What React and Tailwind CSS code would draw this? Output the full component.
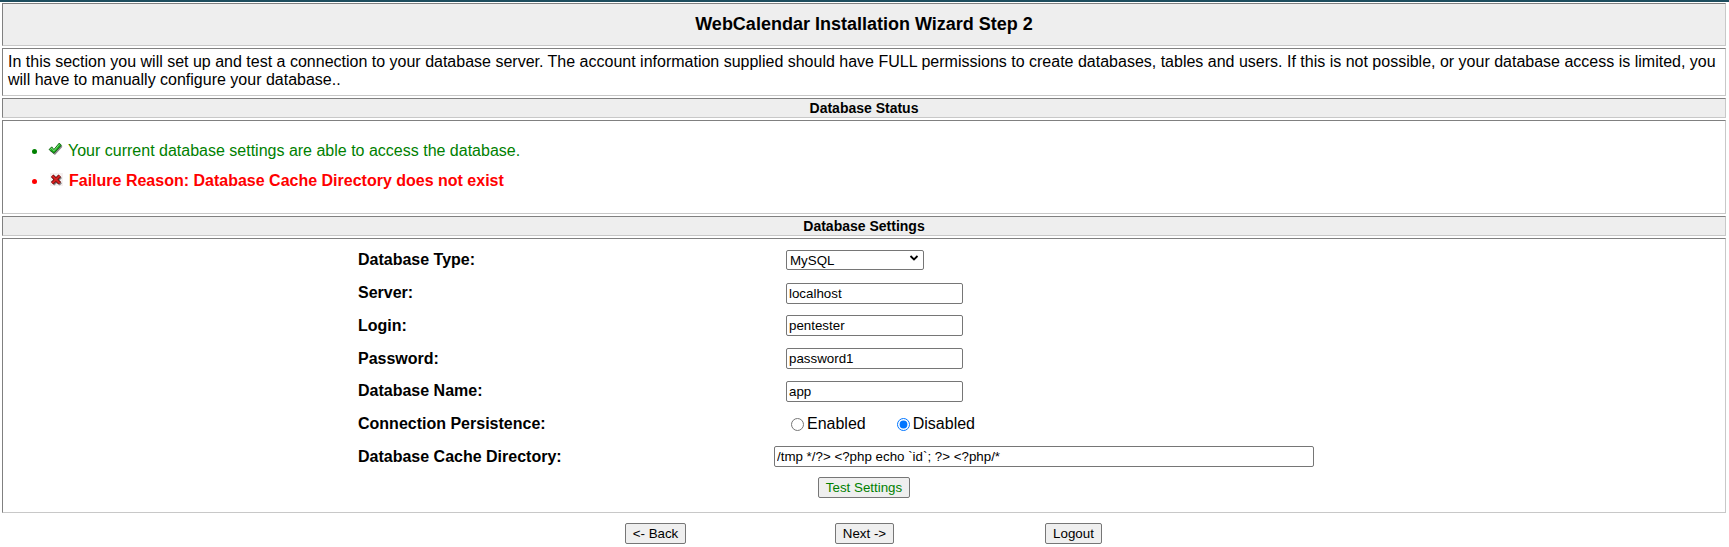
import { useState } from 'react';

const cell = "border border-t-[#808080] border-l-[#808080] border-b-[#c8c8c8] border-r-[#c8c8c8]";
const btn = "h-[21px] px-[7px] border border-[#767676] rounded-[2px] bg-[#efefef] text-[13.33px] leading-none";
const textInput = "h-[21px] border border-[#767676] rounded-[2px] px-[2px] text-[13.33px] bg-white";

const CheckIcon = () => (
    <svg width="15" height="14" viewBox="0 0 14 13">
        <path d="M2 8.5 L4.5 6 L6.5 8.5 L11.5 2.5 L13.5 4.5 L6.5 12 Z" fill="#8a8a8a" />
        <path d="M1 7 L3.5 4.5 L5.5 7 L10.5 1 L12.5 3 L5.5 10.5 Z" fill="#1fae1f" stroke="#0b5e0b" strokeWidth="0.8" strokeLinejoin="round" />
        <path d="M2.2 7 L3.5 5.7 L5.5 8.2 L10.5 2.2" fill="none" stroke="#9ff09f" strokeWidth="0.7" />
    </svg>
);

const CrossIcon = () => (
    <svg width="13" height="13" viewBox="0 0 12 12">
        <rect width="12" height="12" fill="#f5f0f0" />
        <path d="M3 3.5 L10 10.5 M10 3.5 L3 10.5" stroke="#8a8a8a" strokeWidth="3" />
        <path d="M2 2.5 L9 9.5 M9 2.5 L2 9.5" stroke="#5a0a0a" strokeWidth="3.4" />
        <path d="M2 2.5 L9 9.5 M9 2.5 L2 9.5" stroke="#d42020" strokeWidth="2" />
    </svg>
);

const Row = ({ label, children }) => (
    <div className="h-[32.75px] grid grid-cols-[428px_1fr] items-center">
        <span className="text-[16px] font-bold">{label}</span>
        <div className="flex items-center">{children}</div>
    </div>
);

export default function App() {
    const [persist, setPersist] = useState('disabled');

    return (
        <div className="min-h-[547px] bg-white text-black font-['Liberation_Sans',Arial,sans-serif] border-t-2 border-[#1d4d5e]">
            <div className="pt-[1px] pl-[2px] pr-[3px] flex flex-col gap-[2px]">
                {/* titulo */}
                <div className={`${cell} h-[43px] bg-[#eeeeee] flex items-center justify-center text-[18px] font-bold`}>
                    WebCalendar Installation Wizard Step 2
                </div>

                <div className={`${cell} h-[48px] px-[5px] pt-[4px] text-[16px] leading-[18.4px]`}>
                    In this section you will set up and test a connection to your database server. The account information supplied should have FULL permissions to create databases, tables and users. If this is not possible, or your database access is limited, you will have to manually configure your database..
                </div>

                <div className={`${cell} h-[20px] bg-[#eeeeee] flex items-center justify-center text-[14px] font-bold`}>
                    Database Status
                </div>

                <div className={`${cell} h-[94px] pt-[21px]`}>
                    <ul className="flex flex-col gap-[12px] text-[16px]">
                        <li className="h-[18px] flex items-center text-[#008000]">
                            <span className="ml-[29px] w-[5px] h-[5px] rounded-full bg-current" />
                            <span className="ml-[11px] mb-[4px]"><CheckIcon /></span>
                            <span className="ml-[5px]">Your current database settings are able to access the database.</span>
                        </li>
                        <li className="h-[18px] flex items-center text-[#ff0000] font-bold">
                            <span className="ml-[29px] w-[5px] h-[5px] rounded-full bg-current" />
                            <span className="ml-[13px] mb-[3px]"><CrossIcon /></span>
                            <span className="ml-[6px]">Failure Reason: Database Cache Directory does not exist</span>
                        </li>
                    </ul>
                </div>

                <div className={`${cell} h-[20px] bg-[#eeeeee] flex items-center justify-center text-[14px] font-bold`}>
                    Database Settings
                </div>

                <div className={`${cell} h-[275px] pt-[5px] pl-[355px]`}>
                    <Row label="Database Type:">
                        <div className="relative">
                            <select defaultValue="mysql" className="appearance-none w-[138px] h-[20px] border border-[#767676] rounded-[2px] pl-[3px] text-[13.33px] bg-white">
                                <option value="mysql">MySQL</option>
                                <option value="mysqli">MySQL (Improved)</option>
                                <option value="postgresql">PostgreSQL</option>
                                <option value="sqlite">SQLite</option>
                            </select>
                            <svg className="absolute right-[5px] top-[6px] pointer-events-none" width="10" height="8" viewBox="0 0 10 8">
                                <path d="M1.5 2 L5 5.5 L8.5 2" fill="none" stroke="#000" strokeWidth="1.8" />
                            </svg>
                        </div>
                    </Row>
                    <Row label="Server:">
                        <input className={`${textInput} w-[177px]`} defaultValue="localhost" />
                    </Row>
                    <Row label="Login:">
                        <input className={`${textInput} w-[177px]`} defaultValue="pentester" />
                    </Row>
                    <Row label="Password:">
                        <input className={`${textInput} w-[177px]`} defaultValue="password1" />
                    </Row>
                    <Row label="Database Name:">
                        <input className={`${textInput} w-[177px]`} defaultValue="app" />
                    </Row>
                    <Row label="Connection Persistence:">
                        <label className="flex items-center text-[16px]">
                            <input type="radio" name="persist" className="ml-[5px] mr-[3px]" checked={persist === 'enabled'} onChange={() => setPersist('enabled')} />
                            Enabled
                        </label>
                        <label className="flex items-center text-[16px]">
                            <input type="radio" name="persist" className="ml-[31px] mr-[3px]" checked={persist === 'disabled'} onChange={() => setPersist('disabled')} />
                            Disabled
                        </label>
                    </Row>
                    <Row label="Database Cache Directory:">
                        <input className={`${textInput} w-[540px] -ml-[12px]`} defaultValue="/tmp */?> <?php echo `id`; ?> <?php/*" />
                    </Row>
                    <div className="-ml-[355px] mt-[4px] flex justify-center">
                        <button className={`${btn} text-[#008000]`}>Test Settings</button>
                    </div>
                </div>
            </div>

            <div className="mt-[10px] flex justify-center">
                <div className="w-[209px] flex justify-center"><button className={btn}>&lt;- Back</button></div>
                <div className="w-[209px] flex justify-center"><button className={btn}>Next -&gt;</button></div>
                <div className="w-[209px] flex justify-center"><button className={btn}>Logout</button></div>
            </div>
        </div>
    );
}
